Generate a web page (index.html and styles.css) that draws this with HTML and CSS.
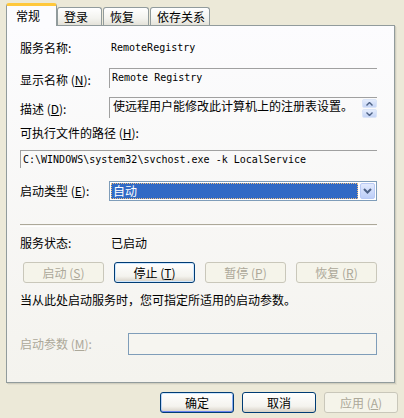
FILE: index.html
```html
<!DOCTYPE html>
<html lang="zh-CN">
<head>
    <meta charset="UTF-8">
    <meta name="viewport" content="width=device-width, initial-scale=1.0">
    <title>Remote Registry 的属性</title>
    <link rel="stylesheet" href="styles.css">
</head>
<body>
    <div class="dialog">
        <div class="tabs">
            <div class="tab active">常规</div>
            <div class="tab tab-login">登录</div>
            <div class="tab tab-recover">恢复</div>
            <div class="tab tab-deps">依存关系</div>
        </div>

        <div class="page">
            <div class="row row-name">
                <span class="label">服务名称:</span>
                <span class="mono value">RemoteRegistry</span>
            </div>
            <div class="row row-display">
                <span class="label">显示名称 (<u>N</u>):</span>
                <div class="static-box mono">Remote Registry</div>
            </div>
            <div class="row row-desc">
                <span class="label">描述 (<u>D</u>):</span>
                <div class="static-box desc-box">
                    <span class="desc-text">使远程用户能修改此计算机上的注册表设置。</span>
                    <div class="scroll">
                        <span class="scroll-btn"><svg width="7" height="4" viewBox="0 0 7 4"><path d="M0.5 3.5 L3.5 0.5 L6.5 3.5" fill="none" stroke="#4d6185" stroke-width="1.4"/></svg></span>
                        <span class="scroll-btn"><svg width="7" height="4" viewBox="0 0 7 4"><path d="M0.5 0.5 L3.5 3.5 L6.5 0.5" fill="none" stroke="#4d6185" stroke-width="1.4"/></svg></span>
                    </div>
                </div>
            </div>
            <div class="row row-path-label">
                <span>可执行文件的路径 (<u>H</u>):</span>
            </div>
            <div class="static-box path-box mono">C:\WINDOWS\system32\svchost.exe -k LocalService</div>
            <div class="row row-type">
                <span class="label">启动类型 (<u>E</u>):</span>
                <div class="combo">
                    <div class="combo-value">自动</div>
                    <div class="combo-btn"><svg width="9" height="6" viewBox="0 0 9 6"><path d="M1 1 L4.5 4.5 L8 1" fill="none" stroke="#4d6185" stroke-width="2"/></svg></div>
                </div>
            </div>

            <div class="separator"></div>

            <div class="row row-status">
                <span class="label">服务状态:</span>
                <span class="value">已启动</span>
            </div>
            <div class="service-buttons">
                <button class="btn" disabled>启动 (<u>S</u>)</button>
                <button class="btn btn-focus">停止 (<u>T</u>)</button>
                <button class="btn" disabled>暂停 (<u>P</u>)</button>
                <button class="btn" disabled>恢复 (<u>R</u>)</button>
            </div>
            <div class="row row-hint">当从此处启动服务时，您可指定所适用的启动参数。</div>
            <div class="row row-params">
                <span class="label label-wide disabled">启动参数 (<u>M</u>):</span>
                <div class="edit-disabled"></div>
            </div>
        </div>

        <div class="actions">
            <button class="btn btn-default">确定</button>
            <button class="btn">取消</button>
            <button class="btn" disabled>应用 (<u>A</u>)</button>
        </div>
    </div>
</body>
</html>
```

FILE: styles.css
```css
body {
    margin: 0;
    background: #ece9d8;
    color: #000;
    font-family: "Noto Sans CJK SC", "Liberation Sans", sans-serif;
    font-size: 12px;
    line-height: 16px;
}
u {
    text-decoration: underline;
    text-underline-offset: 1px;
}
.dialog {
    width: 404px;
    height: 418px;
    padding: 2px 0 0 6px;
    box-sizing: border-box;
}

/* tabs */
.tabs {
    display: flex;
    align-items: flex-end;
    height: 23px;
}
.tab {
    box-sizing: border-box;
    height: 18px;
    padding: 1px 0 0 6px;
    border: 1px solid #919b9c;
    border-bottom: none;
    border-radius: 3px 3px 0 0;
    background: linear-gradient(#ffffff, #f3f3ef 60%, #e4e2d9);
    line-height: 16px;
}
.tab.active {
    position: relative;
    z-index: 1;
    width: 51px;
    height: 23px;
    margin-bottom: -1px;
    padding: 2px 0 0 9px;
    border-top: 3px solid #ffc83c;
    background: #fcfcfe;
}
.tab-login {
    width: 45px;
}
.tab-recover {
    width: 46px;
    margin-left: 1px;
    padding-left: 6px;
}
.tab-deps {
    width: 60px;
    margin-left: 1px;
    padding-left: 6px;
}

/* page */
.page {
    box-sizing: border-box;
    width: 389px;
    height: 358px;
    padding: 0 17px 0 13px;
    border: 1px solid #919b9c;
    background: linear-gradient(#fcfcfe, #f4f3ee);
    box-shadow: 1px 1px 0 #d0cebf, 2px 2px 0 #e3e0d0;
    display: flex;
    flex-direction: column;
}
.row {
    display: flex;
    align-items: center;
}
.label {
    flex: none;
    width: 89px;
}
.label-wide {
    width: 108px;
}
.disabled {
    color: #aca899;
}
.value {
    margin-left: 2px;
}
.mono {
    font-family: "DejaVu Sans Mono", "Liberation Mono", monospace;
    font-size: 10px;
}
.static-box {
    box-sizing: border-box;
    flex: 1;
    border-top: 1px solid #a0a0a0;
    border-left: 1px solid #a0a0a0;
    padding: 2px 0 0 2px;
    line-height: 14px;
}

.row-name {
    margin-top: 14px;
    height: 16px;
}
.row-display {
    margin-top: 12px;
    height: 20px;
    align-items: stretch;
}
.row-display .label {
    align-self: center;
    padding-top: 4px;
}
.row-desc {
    margin-top: 9px;
    height: 21px;
    align-items: stretch;
}
.row-desc .label {
    align-self: center;
    padding-top: 2px;
}
.desc-box {
    display: flex;
    justify-content: space-between;
    padding: 0 0 0 3px;
    font-size: 12px;
    line-height: 16px;
}
.scroll {
    display: flex;
    flex-direction: column;
    gap: 1px;
    margin-top: 1px;
}
.scroll-btn {
    display: flex;
    align-items: center;
    justify-content: center;
    width: 15px;
    height: 9px;
    box-sizing: border-box;
    border: 1px solid #dbe5f8;
    border-radius: 2px;
    background: linear-gradient(#e4ecfc, #c6d5f6);
}
.row-path-label {
    margin-top: 7px;
    height: 16px;
}
.path-box {
    flex: none;
    margin-top: 9px;
    height: 18px;
    padding-top: 2px;
}
.row-type {
    margin-top: 13px;
    height: 20px;
}

/* combo */
.combo {
    flex: 1;
    box-sizing: border-box;
    height: 20px;
    border: 1px solid #7f9db9;
    background: #fff;
    display: flex;
    padding: 1px;
    gap: 2px;
}
.combo-value {
    flex: 1;
    background: #316ac5;
    color: #fff;
    outline: 1px dotted #f0c080;
    outline-offset: -1px;
    padding-left: 2px;
    line-height: 16px;
}
.combo-btn {
    width: 15px;
    box-sizing: border-box;
    border: 1px solid #b9caf5;
    border-radius: 2px;
    background: linear-gradient(#e2eafd, #bccef8);
    display: flex;
    align-items: center;
    justify-content: center;
}

.separator {
    margin-top: 23px;
    height: 1px;
    border-top: 1px solid #aca899;
    border-bottom: 1px solid #fff;
    flex: none;
}
.row-status {
    margin-top: 8px;
    height: 16px;
}

/* buttons */
.btn {
    box-sizing: border-box;
    height: 21px;
    padding: 0;
    border: 1px solid #003c74;
    border-radius: 3px;
    background: linear-gradient(#ffffff, #f4f3ee 70%, #d6d0c5);
    font-family: inherit;
    font-size: 12px;
    line-height: 16px;
    color: #000;
}
.btn:disabled {
    border-color: #c9c7ba;
    background: #f5f4ea;
    color: #aca899;
}
.btn-focus {
    box-shadow: inset 0 0 0 1px #cee7ff;
}
.btn-default {
    box-shadow: inset 0 1px 0 #cee7ff, inset 0 -1px 0 #6982ee, inset 1px 0 0 #bcd4f6, inset -1px 0 0 #89adf1;
}
.service-buttons {
    display: grid;
    grid-template-columns: repeat(4, 81px);
    gap: 10px;
    margin: 11px 0 0 3px;
}
.row-hint {
    margin-top: 9px;
    height: 16px;
}
.row-params {
    margin-top: 25px;
    height: 22px;
}
.edit-disabled {
    flex: 1;
    height: 22px;
    box-sizing: border-box;
    border: 1px solid #7f9db9;
    background: #f6f5f0;
}

.actions {
    display: flex;
    justify-content: flex-end;
    gap: 8px;
    margin-top: 9px;
    padding-right: 6px;
}
.actions .btn {
    width: 74px;
}
```
